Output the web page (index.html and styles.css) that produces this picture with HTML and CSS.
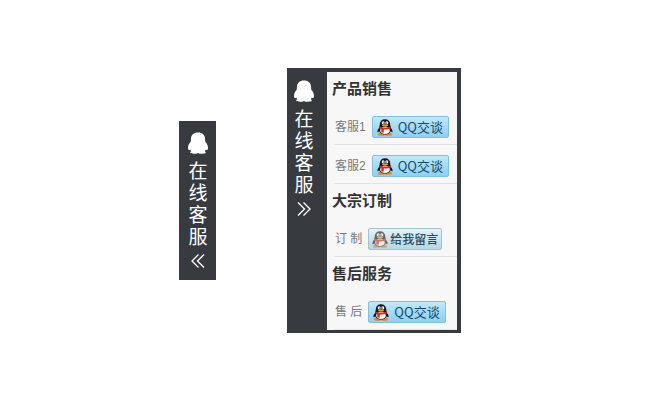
FILE: index.html
```
<!DOCTYPE html>
<html lang="zh-CN">
<head>
<meta charset="UTF-8">
<meta name="viewport" content="width=device-width, initial-scale=1.0">
<title>在线客服</title>
<link rel="stylesheet" href="styles.css">
</head>
<body>

<!-- shared icons -->
<svg class="icons" aria-hidden="true">
    <symbol id="penguin" viewBox="0 0 20 22">
        <path d="M10 .5C5.600.5 3.200 3 3 6.500L2.800 9.500C1.200 11.500 0 13.500 0 16c0 1.300.4 2 1 2 .5 0 .9-.2 1.300-.6.2.7.5 1.300 1 1.900-.8.3-1.100.8-1.100 1.300 0 .8 1.400 1.200 3.800 1.200 1.700 0 3-.3 4-.9 1 .6 2.300.9 4 .9 2.400 0 3.800-.4 3.800-1.200 0-.5-.3-1-1.100-1.300.5-.6.8-1.200 1-1.900.4.4.8.6 1.300.6.6 0 1-.7 1-2 0-2.500-1.200-4.500-2.800-6.500L17 6.500C16.800 3 14.400.5 10 .5z" fill="#fff"/>
    </symbol>
    <symbol id="qq" viewBox="0 0 16 17">
        <path d="M3 8C1.300 9.500.2 11.300.4 12.800c.2.800 1.200.3 2.200-.8zM13 8c1.700 1.500 2.800 3.300 2.600 4.800-.2.800-1.200.3-2.200-.8z" fill="#151515"/>
        <ellipse cx="4.500" cy="15.300" rx="3.600" ry="1.500" fill="#e9852a"/>
        <ellipse cx="11.500" cy="15.300" rx="3.600" ry="1.500" fill="#e9852a"/>
        <path d="M8 .2C4.700.2 2.900 2.200 2.800 5.200c0 1.200-.7 2.500-.9 4.200-.4 3.600 2 6 6.100 6s6.500-2.400 6.100-6c-.2-1.700-.9-3-.9-4.200C13.100 2.200 11.300.2 8 .2z" fill="#151515"/>
        <ellipse cx="8" cy="11.400" rx="4.800" ry="3.600" fill="#fff"/>
        <ellipse cx="6.200" cy="3.900" rx="1.500" ry="1.700" fill="#fff"/>
        <ellipse cx="9.800" cy="3.900" rx="1.500" ry="1.700" fill="#fff"/>
        <circle cx="6.700" cy="4.100" r=".6" fill="#111"/>
        <circle cx="9.300" cy="4.100" r=".6" fill="#111"/>
        <ellipse cx="8" cy="6.500" rx="3" ry=".9" fill="#f6a31c"/>
        <path d="M2.400 7.400C6 9 10 9 13.600 7.400l.4 1.800C11.500 10.400 9 10.600 6.800 10.500v3H4.300v-3.300c-.9-.3-1.700-.6-2.300-1z" fill="#e0251b"/>
    </symbol>
</svg>

<button type="button" class="tab">
    <svg class="logo"><use href="#penguin"/></svg>
    <span class="tab-text">在线客服</span>
    <svg class="arrow" viewBox="0 0 14 14"><path d="M7.500.5 1 7l6.500 6.500M13 .5 6.500 7l6.500 6.500"/></svg>
</button>

<div class="panel">
    <button type="button" class="tab tab-open">
        <svg class="logo"><use href="#penguin"/></svg>
        <span class="tab-text">在线客服</span>
        <svg class="arrow" viewBox="0 0 14 14"><path d="M1 .5 7.500 7 1 13.500M6.500.5 13 7l-6.500 6.500"/></svg>
    </button>
    <div class="content">
        <h3>产品销售</h3>
        <div class="row">
            <span>客服1</span>
            <a href="#" class="qq-btn"><svg><use href="#qq"/></svg>QQ交谈</a>
        </div>
        <div class="row">
            <span>客服2</span>
            <a href="#" class="qq-btn"><svg><use href="#qq"/></svg>QQ交谈</a>
        </div>
        <h3>大宗订制</h3>
        <div class="row">
            <span>订 制</span>
            <a href="#" class="qq-btn offline"><svg><use href="#qq"/></svg>给我留言</a>
        </div>
        <h3>售后服务</h3>
        <div class="row">
            <span>售 后</span>
            <a href="#" class="qq-btn"><svg><use href="#qq"/></svg>QQ交谈</a>
        </div>
    </div>
</div>

</body>
</html>
```

FILE: styles.css
```
* {
    box-sizing: border-box;
}
body {
    font-family: "Liberation Sans", "Noto Sans CJK SC", sans-serif;
    margin: 0;
    padding: 0 10px 16px 0;
    display: flex;
    justify-content: center;
    align-items: center;
    gap: 71px;
    min-height: 100vh;
    background-color: #fff;
}
.icons {
    position: absolute;
    width: 0;
    height: 0;
}
.tab {
    display: flex;
    flex-direction: column;
    align-items: center;
    padding: 11px 8px 12px 9px;
    border: 0;
    background-color: #373b40;
    color: #fff;
    font-family: "Noto Sans CJK SC", sans-serif;
    font-size: 19px;
    line-height: 22px;
    cursor: pointer;
}
.tab-open {
    padding: 12px 13px 0 7px;
}
.logo {
    width: 20px;
    height: 22px;
}
.tab-text {
    width: 20px;
    margin: 5px 0 7px;
    text-align: center;
    word-break: break-all;
}
.arrow {
    width: 14px;
    height: 14px;
    fill: none;
    stroke: #fff;
    stroke-width: 1.3;
}
.panel {
    display: flex;
    background-color: #373b40;
}
.content {
    min-width: 130px;
    margin: 4px 4px 3px 0;
    background-color: #f7f7f7;
}
.content h3 {
    margin: 0;
    padding-left: 5px;
    font-size: 15px;
    line-height: 34px;
    color: #333;
}
.row {
    display: flex;
    align-items: center;
    gap: 6px;
    margin-left: 7px;
    padding: 10px 0 6px 1px;
    border-bottom: 1px solid #e2e2e2;
    font-size: 12px;
    line-height: 22px;
    color: #777;
}
.qq-btn {
    display: flex;
    align-items: center;
    gap: 5px;
    height: 22px;
    padding: 0 5px 0 4px;
    border: 1px solid #7fc0df;
    border-radius: 2px;
    background: linear-gradient(#c0e8fb, #a5dbf8 50%, #8fd0f3);
    color: #114a66;
    font-family: "Noto Sans CJK SC", sans-serif;
    font-size: 13px;
    line-height: 20px;
    text-decoration: none;
}
.qq-btn svg {
    width: 16px;
    height: 17px;
}
.offline {
    gap: 2px;
    padding: 0 3px;
    border-color: #a3c3cf;
    background: linear-gradient(#e6f3f8, #cbe3ec 50%, #b9d7e2);
    color: #2b4d5b;
    font-size: 12px;
    font-weight: 500;
}
.offline svg {
    opacity: 0.6;
}
```
